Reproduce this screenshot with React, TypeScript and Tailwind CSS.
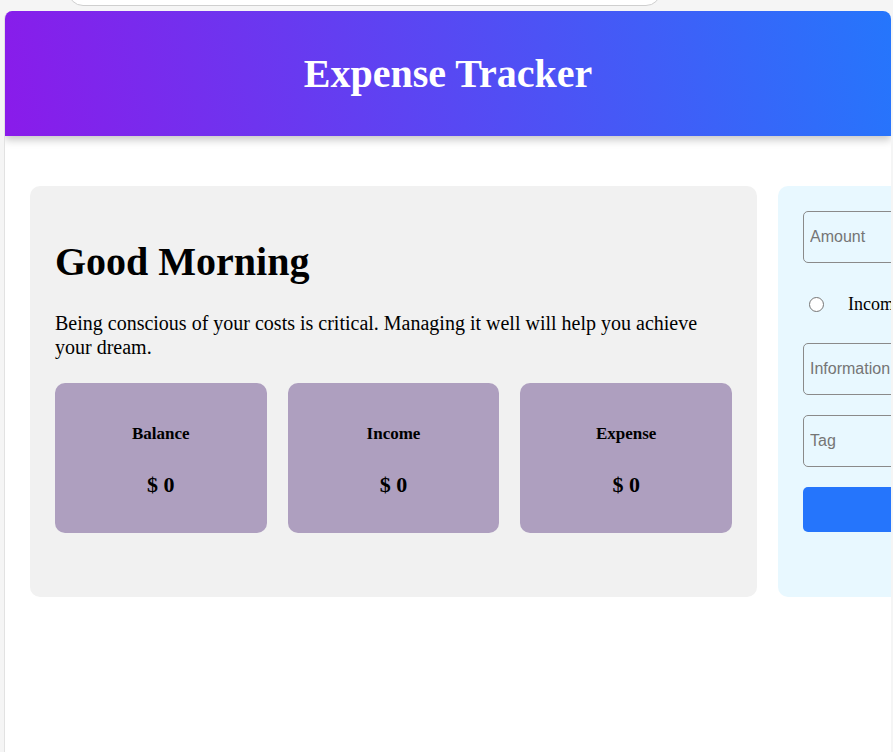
export default function App() {
  const stats = [
    { label: "Balance", value: "$ 0" },
    { label: "Income", value: "$ 0" },
    { label: "Expense", value: "$ 0" },
  ];

  return (
    <div className="flex h-screen w-full flex-col overflow-hidden bg-[#f5f5f5] font-['Liberation_Serif',serif] text-black">
      {/* browser-ish top strip */}
      <div className="flex h-[11px] shrink-0 items-end overflow-hidden pb-[5px] pl-[68px]">
        <div className="h-[30px] w-[593px] shrink-0 rounded-full border border-[#cfcfcf] bg-white" />
      </div>

      <div className="ml-[4px] mr-[2px] flex min-h-0 flex-1 flex-col overflow-hidden rounded-t-lg border-l border-[#e2e2e2] bg-white">
        <header className="relative z-10 flex h-[125px] shrink-0 items-center justify-center bg-[linear-gradient(78deg,#8a1bea,#2576fc)] shadow-[0_4px_8px_rgba(0,0,0,0.22)]">
          <h1 className="text-[40px] font-bold text-white">Expense Tracker</h1>
        </header>

        <main className="flex gap-[21px] pl-[25px] pt-[50px]">
          <section className="flex h-[411px] w-[727px] shrink-0 flex-col rounded-[10px] bg-[#f1f1f1] p-[25px]">
            <h2 className="mt-[28px] text-[40px] leading-[46px] font-bold">Good Morning</h2>
            <p className="mt-[26px] text-[20px] leading-[24px]">
              Being conscious of your costs is critical. Managing it well will help you achieve
              your dream.
            </p>
            <div className="mt-[24px] grid grid-cols-3 gap-[21px]">
              {stats.map((s) => (
                <div
                  key={s.label}
                  className="flex h-[150px] flex-col items-center justify-center rounded-[10px] bg-[#ae9fbf] pt-[6px]"
                >
                  <span className="text-[17px] font-bold">{s.label}</span>
                  <span className="mt-[21px] text-[22px] font-bold">{s.value}</span>
                </div>
              ))}
            </div>
          </section>

          <section className="flex h-[411px] w-[420px] shrink-0 flex-col gap-[20px] rounded-[10px] bg-[#e8f8ff] p-[25px]">
            <input
              placeholder="Amount"
              className="h-[52px] w-full rounded-[5px] border border-[#8a8a8a] bg-transparent px-[6px] font-['Liberation_Sans',sans-serif] text-[16px] placeholder:text-[#757575]"
            />
            <label className="flex h-[40px] items-center gap-[24px] pl-[6px] pt-[3px] text-[18px]">
              <span className="h-[15px] w-[15px] rounded-full border border-[#767676] bg-white" />
              Income
              <span className="ml-6 h-[15px] w-[15px] rounded-full border border-[#767676] bg-white" />
              Expense
            </label>
            <input
              placeholder="Information"
              className="h-[52px] w-full rounded-[5px] border border-[#8a8a8a] bg-transparent px-[6px] font-['Liberation_Sans',sans-serif] text-[16px] placeholder:text-[#757575]"
            />
            <input
              placeholder="Tag"
              className="h-[52px] w-full rounded-[5px] border border-[#8a8a8a] bg-transparent px-[6px] font-['Liberation_Sans',sans-serif] text-[16px] placeholder:text-[#757575]"
            />
            <button className="h-[45px] w-full rounded-[5px] bg-[#2575fc] text-[16px] text-white">
              Add Transaction
            </button>
          </section>
        </main>
      </div>
    </div>
  );
}
